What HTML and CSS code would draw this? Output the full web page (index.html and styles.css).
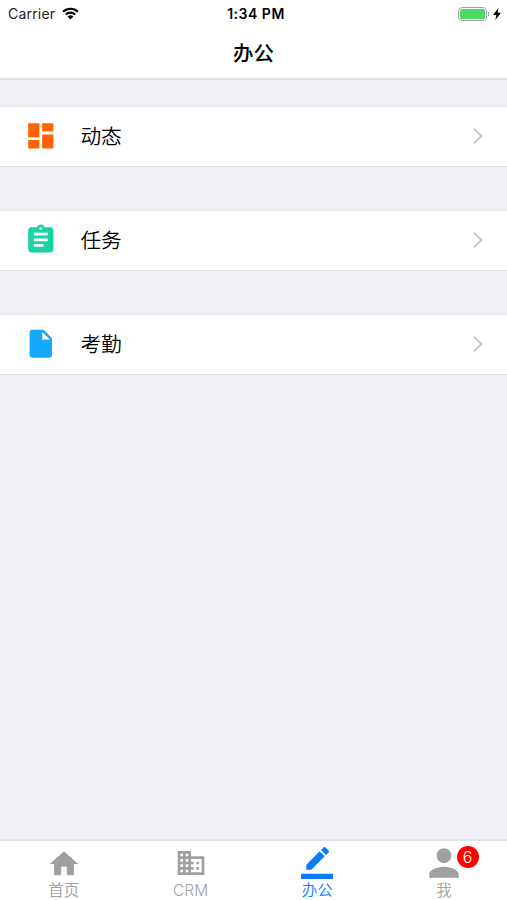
FILE: index.html
```html
<!DOCTYPE html>
<html lang="zh">
<head>
    <meta charset="UTF-8">
    <meta name="viewport" content="width=device-width, initial-scale=1.0">
    <title>办公</title>
    <link rel="stylesheet" href="styles.css">
</head>
<body>
    <div class="app">
        <header class="header">
            <div class="status">
                <div class="status-left">
                    <span class="carrier">Carrier</span>
                    <svg class="wifi" viewBox="0 0 18 13" fill="none" stroke="#000" stroke-width="2.3">
                        <path d="M1.2 4.6a11.2 11.2 0 0 1 15.6 0M4 7.6a7.2 7.2 0 0 1 10 0"/>
                        <path fill="#000" stroke="none" d="M9 12.8 5.9 9.8a4.4 4.4 0 0 1 6.2 0z"/>
                    </svg>
                </div>
                <div class="time">1:34 PM</div>
                <div class="status-right">
                    <div class="battery"><div class="level"></div></div>
                    <svg class="bolt" viewBox="0 0 8 12">
                        <path d="M5.4 0 0 7h3.3L2.4 12 8 4.8H4.7z"/>
                    </svg>
                </div>
            </div>
            <h1>办公</h1>
        </header>

        <ul class="list">
            <li>
                <svg class="icon orange" viewBox="0 0 24 24"><path d="M3 13h8V3H3v10zm0 8h8v-6H3v6zm10 0h8V11h-8v10zm0-18v6h8V3h-8z"/></svg>
                <span class="label">动态</span>
                <svg class="arrow" viewBox="0 0 10 16"><path d="M1.2 1 8.4 8l-7.2 7"/></svg>
            </li>
            <li>
                <svg class="icon green" viewBox="0 0 24 24"><path d="M19 3h-4.18C14.4 1.84 13.3 1 12 1c-1.3 0-2.4.84-2.82 2H5c-1.1 0-2 .9-2 2v14c0 1.1.9 2 2 2h14c1.1 0 2-.9 2-2V5c0-1.1-.9-2-2-2zm-7 0c.55 0 1 .45 1 1s-.45 1-1 1-1-.45-1-1 .45-1 1-1zm2 14H7v-2h7v2zm3-4H7v-2h10v2zm0-4H7V7h10v2z"/></svg>
                <span class="label">任务</span>
                <svg class="arrow" viewBox="0 0 10 16"><path d="M1.2 1 8.4 8l-7.2 7"/></svg>
            </li>
            <li>
                <svg class="icon blue" viewBox="0 0 24 24"><path d="M6 2c-1.1 0-1.99.9-1.99 2L4 20c0 1.1.89 2 1.99 2H18c1.1 0 2-.9 2-2V8l-6-6H6zm7 7V3.5L18.5 9H13z"/></svg>
                <span class="label">考勤</span>
                <svg class="arrow" viewBox="0 0 10 16"><path d="M1.2 1 8.4 8l-7.2 7"/></svg>
            </li>
        </ul>

        <nav class="tabs">
            <a class="tab">
                <div class="tab-icon">
                    <svg class="home" viewBox="0 0 24 24"><path d="M10 20v-6h4v6h5v-8h3L12 3 2 12h3v8z"/></svg>
                </div>
                <span>首页</span>
            </a>
            <a class="tab">
                <div class="tab-icon">
                    <svg class="crm" viewBox="0 0 24 24"><path d="M12 7V3H2v18h20V7H12zM6 19H4v-2h2v2zm0-4H4v-2h2v2zm0-4H4V9h2v2zm0-4H4V5h2v2zm4 12H8v-2h2v2zm0-4H8v-2h2v2zm0-4H8V9h2v2zm0-4H8V5h2v2zm10 12h-8v-2h2v-2h-2v-2h2v-2h-2V9h8v10zm-2-8h-2v2h2v-2zm0 4h-2v2h2v-2z"/></svg>
                </div>
                <span>CRM</span>
            </a>
            <a class="tab active">
                <div class="tab-icon">
                    <svg class="edit" viewBox="0 0 24 24"><path d="M17.75 7 14 3.25l-10 10V17h3.75l10-10zm2.96-2.96c.39-.39.39-1.02 0-1.41L18.37.29c-.39-.39-1.02-.39-1.41 0L15 2.25 18.75 6l1.96-1.96zM0 20h24v4H0z"/></svg>
                </div>
                <span>办公</span>
            </a>
            <a class="tab">
                <div class="tab-icon">
                    <svg class="person" viewBox="0 0 24 24"><path d="M12 12c2.21 0 4-1.79 4-4s-1.79-4-4-4-4 1.79-4 4 1.79 4 4 4zm0 2c-2.67 0-8 1.34-8 4v2h16v-2c0-2.66-5.33-4-8-4z"/></svg>
                    <div class="badge">6</div>
                </div>
                <span>我</span>
            </a>
        </nav>
    </div>
</body>
</html>
```
FILE: styles.css
```css
body{
    margin: 0;
    font-family: Inter, "Noto Sans CJK SC", sans-serif;
    background-color: #efeff4;
    color: #000;
}
.app{
    height: 100vh;
    display: flex;
    flex-direction: column;
}

.header{
    height: 78px;
    background-color: #fff;
    border-bottom: 2px solid #e1e1e4;
}
.header h1{
    margin: 0;
    font-size: 20.5px;
    line-height: 53px;
    font-weight: 500;
    text-align: center;
}
.status{
    height: 27px;
    display: grid;
    grid-template-columns: 1fr auto 1fr;
    align-items: center;
    padding: 0 6px 0 8px;
    box-sizing: border-box;
}
.status-left{
    display: flex;
    align-items: center;
    gap: 7px;
}
.carrier{
    font-size: 14px;
    letter-spacing: 0.2px;
    color: #222;
}
.wifi{
    width: 17px;
    height: 13px;
}
.time{
    font-size: 14px;
    font-weight: 600;
    letter-spacing: 0.5px;
    padding-left: 3px;
}
.status-right{
    display: flex;
    justify-content: flex-end;
    align-items: center;
    gap: 6px;
}
.battery{
    width: 29px;
    height: 14px;
    box-sizing: border-box;
    border: 1px solid #a5a5a5;
    border-radius: 4px;
    padding: 1px;
    position: relative;
}
.battery::after{
    content: "";
    position: absolute;
    right: -3px;
    top: 4px;
    width: 1px;
    height: 4px;
    background-color: #a5a5a5;
}
.level{
    height: 100%;
    border-radius: 2px;
    background-color: #4cd964;
}
.bolt{
    width: 8px;
    height: 12px;
}

.list{
    flex: 1;
    margin: 0;
    padding: 26px 0 0;
    list-style: none;
}
.list li{
    height: 61px;
    box-sizing: border-box;
    display: flex;
    align-items: center;
    background-color: #fff;
    border-top: 1px solid #e4e4e7;
    border-bottom: 1px solid #e0e0e3;
    margin-bottom: 43px;
    padding: 0 24px 1px;
}
.icon{
    width: 33.6px;
    height: 33.6px;
}
.orange{
    fill: #ff6200;
}
.green{
    fill: #19d3a2;
}
.blue{
    fill: #13a9fd;
}
.label{
    flex: 1;
    margin-left: 22.8px;
    padding-top: 1px;
    font-size: 20.7px;
    line-height: 30px;
    font-weight: 350;
}
.arrow{
    width: 10px;
    height: 16px;
    fill: none;
    stroke: #c7c7cc;
    stroke-width: 2;
}

.tabs{
    height: 59px;
    display: flex;
    background-color: #fff;
    border-top: 2px solid #e2e2e5;
}
.tab{
    flex: 1;
    display: flex;
    flex-direction: column;
    align-items: center;
    color: #a0a0a0;
    fill: #a0a0a0;
    font-size: 15.5px;
    font-weight: 350;
    line-height: 19px;
}
.tab span{
    padding-left: 1px;
}
.tab.active{
    color: #0a7aff;
    fill: #0a7aff;
}
.tab-icon{
    width: 46px;
    height: 40px;
    box-sizing: border-box;
    display: flex;
    justify-content: center;
    align-items: center;
    padding-top: 4px;
    position: relative;
}
.home{
    width: 34px;
    margin: 2px 0 0 2px;
}
.crm{
    width: 32px;
    margin-left: 1px;
}
.edit{
    width: 32px;
    margin-left: 1px;
}
.person{
    width: 44px;
    flex-shrink: 0;
}
.badge{
    position: absolute;
    top: 5px;
    right: -12px;
    width: 22px;
    height: 22px;
    border-radius: 50%;
    background-color: #f00;
    color: #fff;
    font-size: 16px;
    line-height: 22px;
    text-align: center;
}
```
